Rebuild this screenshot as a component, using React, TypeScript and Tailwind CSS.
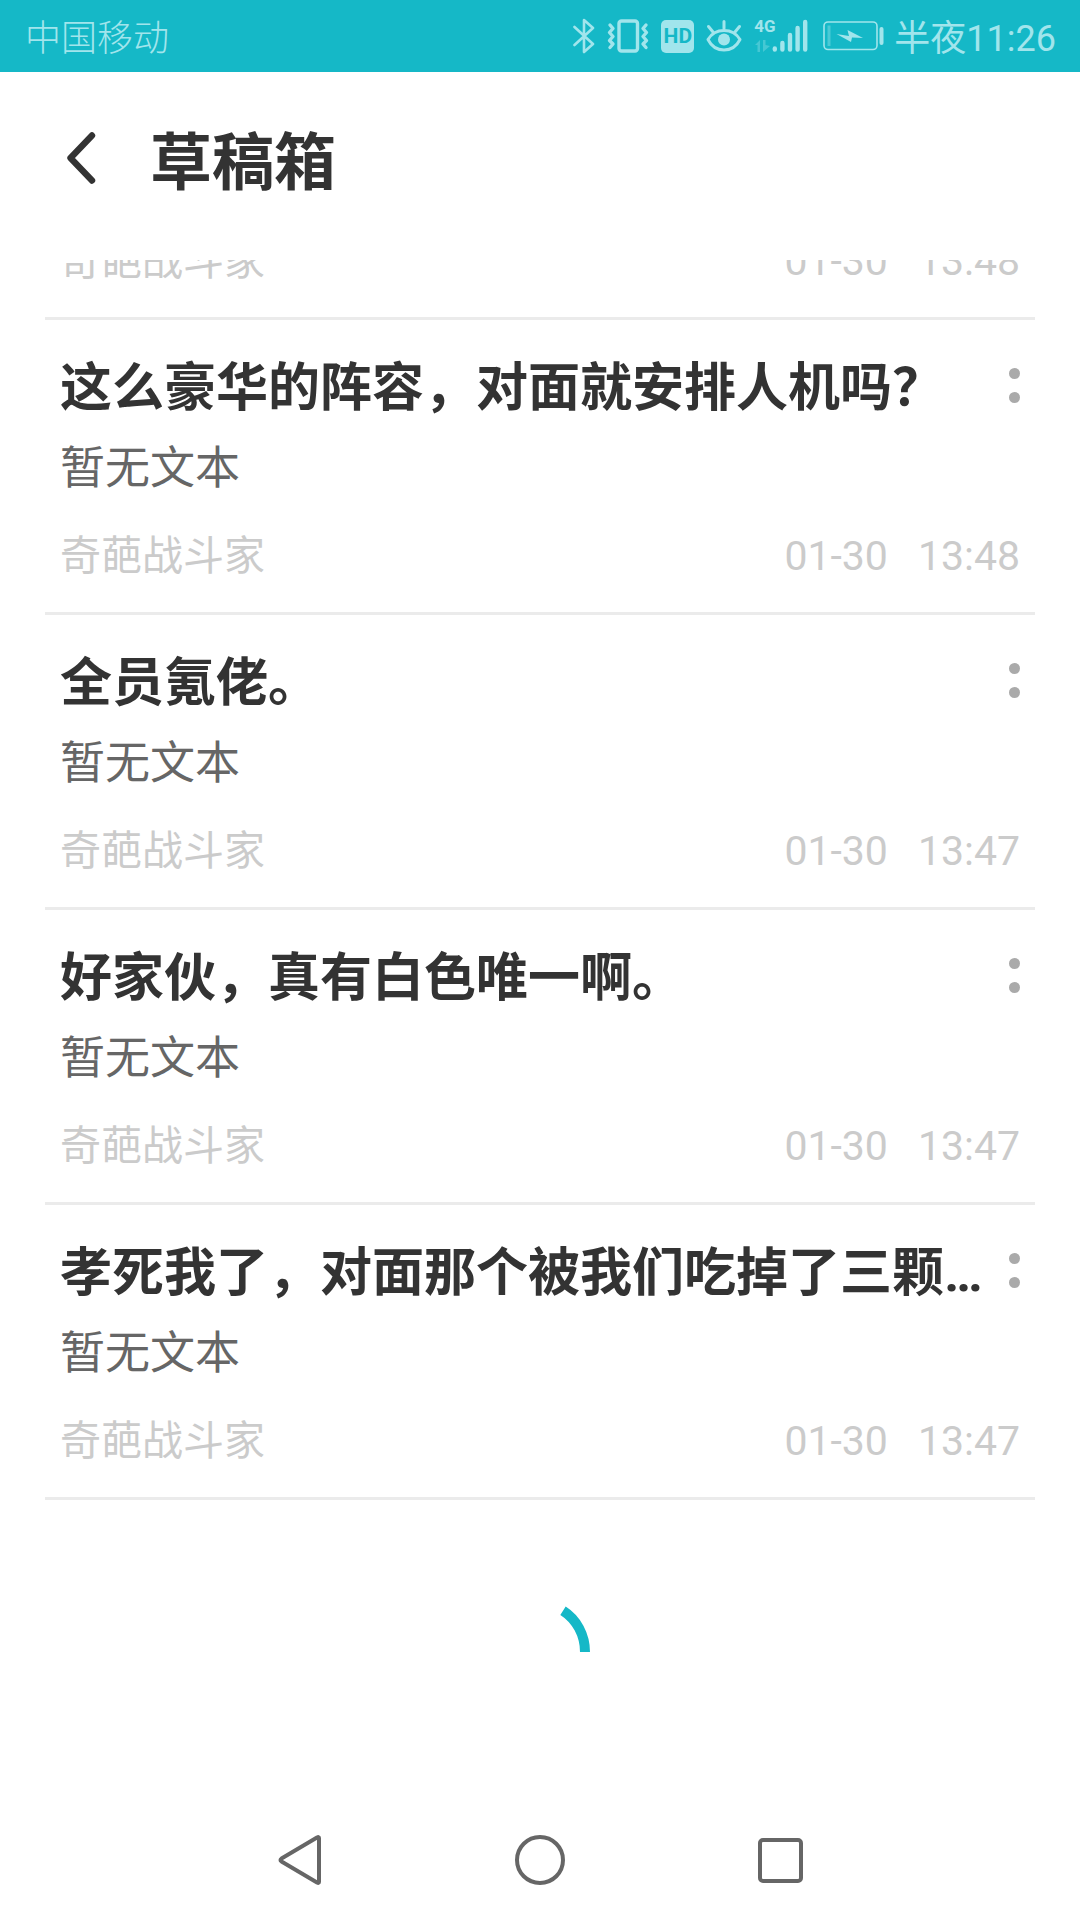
type Draft = { title: string; game: string; date: string; time: string };

const drafts: Draft[] = [
  { title: "这么豪华的阵容，对面就安排人机吗？", game: "奇葩战斗家", date: "01-30", time: "13:48" },
  { title: "全员氪佬。", game: "奇葩战斗家", date: "01-30", time: "13:47" },
  { title: "好家伙，真有白色唯一啊。", game: "奇葩战斗家", date: "01-30", time: "13:47" },
  { title: "孝死我了，对面那个被我们吃掉了三颗…", game: "奇葩战斗家", date: "01-30", time: "13:47" },
];

function BluetoothIcon() {
  return (
    <svg width="22" height="36" viewBox="0 0 22 36" fill="none" stroke="currentColor" strokeWidth="2.6" strokeLinejoin="round" strokeLinecap="round">
      <path d="M1.5 9 L20 26 L11 34 V2 L20 10 L1.5 27" />
    </svg>
  );
}

function VibrateIcon() {
  return (
    <svg width="42" height="36" viewBox="0 0 42 36" fill="none" stroke="currentColor" strokeWidth="3.4" strokeLinejoin="round" strokeLinecap="round">
      <rect x="12" y="3" width="18.500" height="30" rx="2.500" />
      <path d="M3 7 L6 10.500 L2.500 14.500 L6 18.500 L2.500 22.500 L6 26 L3 29.500" />
      <path d="M39 7 L36 10.500 L39.500 14.500 L36 18.500 L39.500 22.500 L36 26 L39 29.500" />
    </svg>
  );
}

function HdIcon() {
  return (
    <span className="flex h-[33px] w-[33px] items-center justify-center rounded-[5px] bg-[#a1e5ec] text-[21px] leading-none font-bold text-[#15b8c7]">
      HD
    </span>
  );
}

function EyeIcon() {
  return (
    <svg width="36" height="36" viewBox="0 0 36 36" fill="none" stroke="currentColor" strokeWidth="3" strokeLinecap="round">
      <path d="M2 21.500 C9 9.500 27 9.500 34 21.500 C27 35.500 9 35.500 2 21.500 Z" strokeLinejoin="round" />
      <circle cx="18" cy="21.500" r="6" fill="currentColor" stroke="none" />
      <path d="M18 3.500 V10.500 M2.500 8.500 L7 14 M33.500 8.500 L29 14" />
    </svg>
  );
}

function SignalIcon() {
  return (
    <span className="relative block h-9 w-[54px]">
      <span className="absolute top-0 left-0 text-[17px] leading-4 font-bold">4G</span>
      <svg className="absolute inset-0" width="54" height="36" viewBox="0 0 54 36" fill="none" stroke="currentColor" strokeWidth="4.400" strokeLinecap="round">
        <path d="M20.800 30.500 V31.500 M28.400 25 V31.500 M36 17 V31.500 M43.600 10 V31.500 M51.200 4 V31.500" />
        <g opacity="0.35" fill="currentColor" stroke="none">
          <path d="M1 27 L6 22 V34 H3.500 V27 Z" />
          <path d="M9 22 H11.500 V27 L16 28 L9 34 Z" />
        </g>
      </svg>
    </span>
  );
}

function BatteryIcon() {
  return (
    <svg width="61" height="30" viewBox="0 0 61 30" fill="none">
      <rect x="1" y="1" width="53" height="27.500" rx="4" stroke="currentColor" strokeWidth="1.600" />
      <rect x="56.500" y="6" width="4" height="18" rx="2" fill="currentColor" />
      <rect x="4.500" y="4.500" width="3" height="20.500" fill="currentColor" opacity="0.4" />
      <path d="M13.500 13 L26 15 L24.500 9 L40 17 L29 16.500 L28 21 Z" fill="currentColor" />
    </svg>
  );
}

function StatusBar() {
  return (
    <div className="flex h-[72px] shrink-0 items-center justify-between bg-[#15b8c7] pr-6 pl-[25px] text-[36px] leading-[66px] text-[#a1e5ec]">
      <span className="pt-[6px] font-light">中国移动</span>
      <div className="flex items-center">
        <div className="flex items-center gap-3">
          <BluetoothIcon />
          <VibrateIcon />
          <HdIcon />
          <EyeIcon />
          <SignalIcon />
        </div>
        <div className="mr-[10px] ml-[15px]">
          <BatteryIcon />
        </div>
        <span className="pt-[6px]">半夜11:26</span>
      </div>
    </div>
  );
}

function Meta({ game, date, time }: Omit<Draft, "title">) {
  return (
    <div className="flex items-center justify-between text-[41px] leading-12 text-[#cbcbcb]">
      <span>{game}</span>
      <span className="flex gap-[30px]">
        <time>{date}</time>
        <time>{time}</time>
      </span>
    </div>
  );
}

function DraftItem({ draft }: { draft: Draft }) {
  return (
    <li className="border-b-3 border-[#ebebeb] px-[15px] pt-[33px] pb-8">
      <div className="flex items-center justify-between">
        <h2 className="min-w-0 truncate text-[52px] leading-[72px] font-bold text-[#333]">{draft.title}</h2>
        <button type="button" aria-label="更多" className="flex shrink-0 flex-col gap-[13px] pb-2">
          <span className="size-[11px] rounded-full bg-[#aaa]" />
          <span className="size-[11px] rounded-full bg-[#aaa]" />
        </button>
      </div>
      <p className="mt-[14px] mb-[33px] text-[45px] leading-[60px] text-[#666]">暂无文本</p>
      <Meta game={draft.game} date={draft.date} time={draft.time} />
    </li>
  );
}

function NavBar() {
  return (
    <nav className="flex h-[120px] shrink-0 items-center justify-center text-[#666]">
      <button type="button" aria-label="返回" className="flex w-60 justify-center">
        <svg width="44" height="50" viewBox="0 0 44 50" fill="none" stroke="currentColor" strokeWidth="4" strokeLinejoin="round">
          <path d="M41 3 V47 Q41 48.500 39 47.500 L3.500 26.500 Q1.500 25 3.500 23.500 L39 2.500 Q41 1.500 41 3 Z" />
        </svg>
      </button>
      <button type="button" aria-label="主屏幕" className="flex w-60 justify-center">
        <span className="size-[50px] rounded-full border-4 border-[#666]" />
      </button>
      <button type="button" aria-label="最近任务" className="flex w-60 justify-center">
        <span className="size-[45px] rounded-[5px] border-4 border-[#666]" />
      </button>
    </nav>
  );
}

export default function App() {
  return (
    <div className="flex min-h-screen flex-col bg-white font-['Roboto','Noto_Sans_CJK_SC',sans-serif]">
      <StatusBar />
      <header className="flex h-[188px] shrink-0 items-center pb-1 pl-[66px]">
        <button type="button" aria-label="返回" className="pb-3">
          <svg width="30" height="52" viewBox="0 0 30 52" fill="none" stroke="#333" strokeWidth="6.400" strokeLinecap="round" strokeLinejoin="round">
            <path d="M26 3.500 L4.500 26 L26 48.500" />
          </svg>
        </button>
        <h1 className="ml-[54px] text-[62px] leading-[80px] font-bold text-[#333]">草稿箱</h1>
      </header>
      <main className="flex-1 px-[45px]">
        <ul>
          <li className="flex h-[60px] flex-col justify-end overflow-hidden border-b-3 border-[#ebebeb] px-[15px] pb-8">
            <Meta game="奇葩战斗家" date="01-30" time="13:48" />
          </li>
          {drafts.map((d) => (
            <DraftItem key={d.title} draft={d} />
          ))}
        </ul>
        <div className="flex justify-center pt-[100px]" role="status" aria-label="加载中">
          <svg width="100" height="104" viewBox="0 0 100 104" fill="none" stroke="#15b8c7" strokeWidth="10">
            <path d="M73 10.700 A45 48 0 0 1 95 52" />
          </svg>
        </div>
      </main>
      <NavBar />
    </div>
  );
}
